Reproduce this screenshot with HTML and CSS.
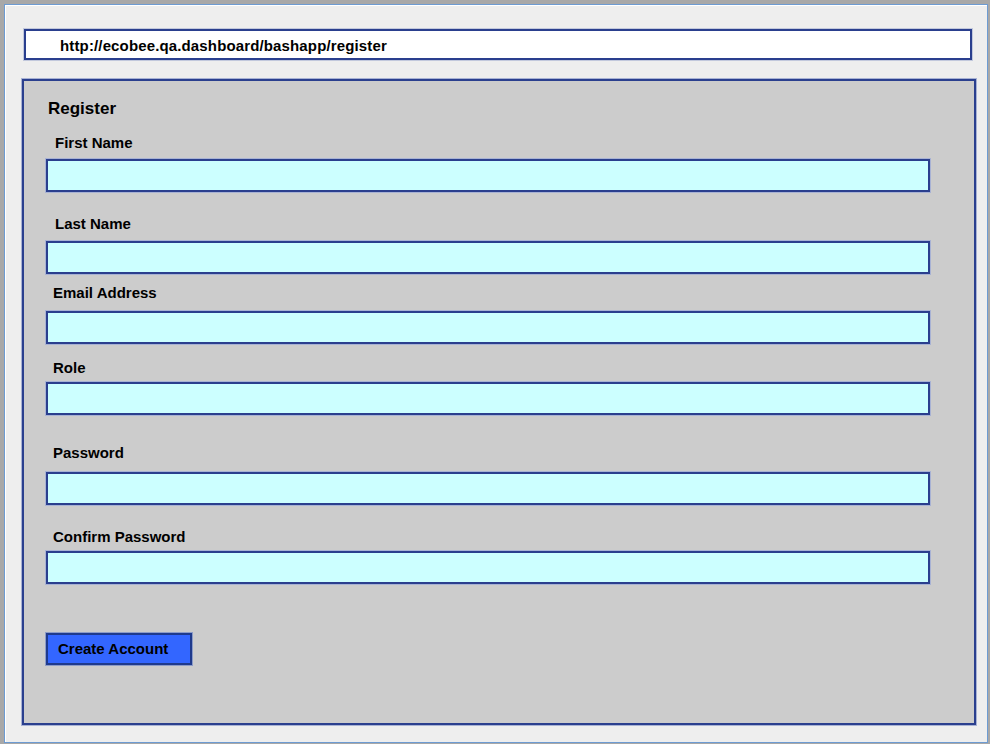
FILE: index.html
```html
<!DOCTYPE html>
<html>
<head>
<meta charset="utf-8">
<link rel="stylesheet" href="styles.css">
</head>
<body>
<div class="window">
  <div class="urlbar">http://ecobee.qa.dashboard/bashapp/register</div>
  <div class="panel">
    <div class="title">Register</div>
    <div class="field f1">
      <div class="label ind">First Name</div>
      <div class="input"></div>
    </div>
    <div class="field f2">
      <div class="label ind">Last Name</div>
      <div class="input"></div>
    </div>
    <div class="field f3">
      <div class="label">Email Address</div>
      <div class="input"></div>
    </div>
    <div class="field f4">
      <div class="label">Role</div>
      <div class="input"></div>
    </div>
    <div class="field f5">
      <div class="label">Password</div>
      <div class="input"></div>
    </div>
    <div class="field f6">
      <div class="label">Confirm Password</div>
      <div class="input"></div>
    </div>
    <div class="button">Create Account</div>
  </div>
</div>
</body>
</html>
```
FILE: styles.css
```css
html, body {
  margin: 0;
  padding: 0;
}
body {
  width: 990px;
  height: 744px;
  background: #a8a8a8;
  font-family: "Liberation Sans", Arial, sans-serif;
  font-weight: bold;
  color: #000;
  overflow: hidden;
}
.window {
  position: relative;
  margin: 4px 0 0 4px;
  width: 984px;
  height: 739px;
  box-sizing: border-box;
  border: 1px solid #6d9bd2;
  background: #eeeeee;
  box-shadow: inset 1px 1px 0 #ffffff;
  padding-top: 24px;
}
.urlbar {
  margin-left: 19px;
  width: 948px;
  height: 31px;
  box-sizing: border-box;
  border: 2px solid #2a3f8e;
  box-shadow: 0 0 0 1px #c2c8dc;
  background: #ffffff;
  padding-left: 34px;
  padding-top: 1px;
  font-size: 15px;
  line-height: 27px;
  letter-spacing: 0.14px;
}
.panel {
  margin-top: 19px;
  margin-left: 17px;
  width: 954px;
  height: 646px;
  box-sizing: border-box;
  border: 2px solid #2a3f8e;
  box-shadow: 0 0 0 1px #a8b2d4;
  background: #cccccc;
  padding: 18px 0 0 22px;
}
.title {
  font-size: 17px;
  line-height: 20px;
  padding-left: 2px;
}
.label {
  font-size: 15px;
  line-height: 18px;
  padding-left: 7px;
}
.label.ind {
  padding-left: 9px;
}
.input {
  width: 884px;
  height: 33px;
  box-sizing: border-box;
  border: 2px solid #2a3f8e;
  box-shadow: 0 0 0 1px #a8b2d4;
  background: #ccffff;
}
.f1 { margin-top: 15px; }
.f1 .input { margin-top: 7px; }
.f2 { margin-top: 23px; }
.f2 .input { margin-top: 8px; }
.f3 { margin-top: 10px; }
.f3 .input { margin-top: 9px; }
.f4 { margin-top: 15px; }
.f4 .input { margin-top: 5px; }
.f5 { margin-top: 29px; }
.f5 .input { margin-top: 10px; }
.f6 { margin-top: 23px; }
.f6 .input { margin-top: 5px; }
.button {
  margin-top: 49px;
  width: 146px;
  height: 32px;
  box-sizing: border-box;
  border: 2px solid #1f3a8c;
  box-shadow: 0 0 0 1px #8c9cc8;
  background: #3366ff;
  padding-left: 10px;
  font-size: 15px;
  line-height: 28px;
}
```
